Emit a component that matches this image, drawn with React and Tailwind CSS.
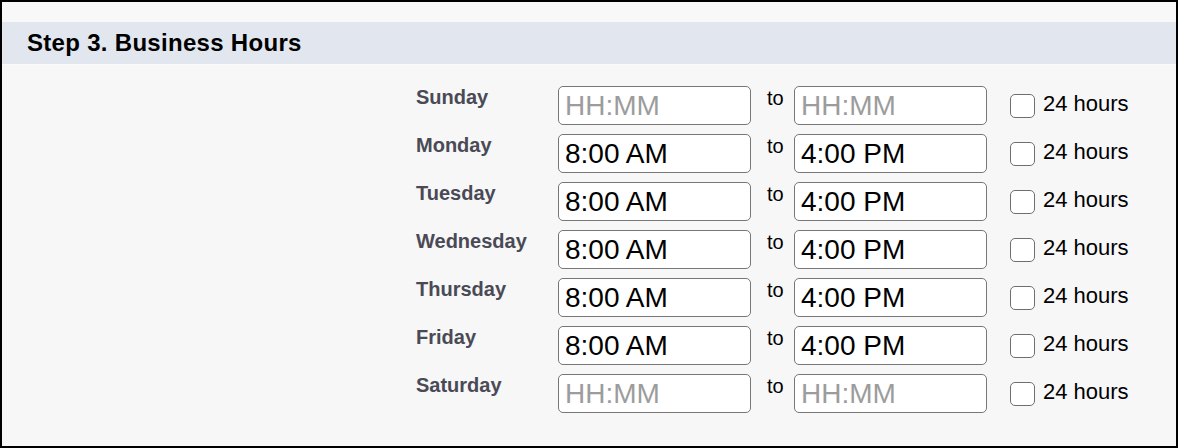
import React from "react";

const days = [
  { name: "Sunday", from: "", to: "" },
  { name: "Monday", from: "8:00 AM", to: "4:00 PM" },
  { name: "Tuesday", from: "8:00 AM", to: "4:00 PM" },
  { name: "Wednesday", from: "8:00 AM", to: "4:00 PM" },
  { name: "Thursday", from: "8:00 AM", to: "4:00 PM" },
  { name: "Friday", from: "8:00 AM", to: "4:00 PM" },
  { name: "Saturday", from: "", to: "" },
];

function TimeInput({ value }) {
  return (
    <input
      readOnly
      value={value}
      placeholder="HH:MM"
      className="box-border w-[193px] h-[39px] shrink-0 border-[1.5px] border-[#777] rounded-[5px] bg-white px-[6px] text-[28px] leading-none text-black placeholder:text-[#9c9c9c] outline-none"
      style={{ fontFamily: "'Liberation Sans', Arial, sans-serif" }}
    />
  );
}

export default function App() {
  return (
    <div
      className="w-[1178px] h-[448px] box-border border-2 border-black bg-[#f7f7f7] flex flex-col"
      style={{ fontFamily: "'Liberation Sans', Arial, sans-serif" }}
    >
      <div className="h-[20px] bg-[#f8f8f8]" />
      <div className="h-[43px] bg-[#e2e6ee] flex items-center pl-[25px] border-b border-[#fbfbfb]">
        <span className="text-[24px] font-bold text-black tracking-[0.3px]">Step 3. Business Hours</span>
      </div>
      <div className="flex flex-col gap-[9px] pt-[21px] pl-[414px]">
        {days.map((d) => (
          <div key={d.name} className="flex items-start h-[39px]">
            <div className="w-[142px] shrink-0 text-[20px] leading-[23px] font-bold text-[#4a4a56]">
              {d.name}
            </div>
            <TimeInput value={d.from} />
            <div className="w-[43px] shrink-0 pl-[16px] text-[20px] leading-[23px] text-black pt-[1px]">to</div>
            <TimeInput value={d.to} />
            <div className="flex items-center h-[39px] pl-[23px]">
              <div className="w-[25px] h-[24px] box-border border-[1.5px] border-[#6f6f6f] rounded-[5px] bg-white" />
              <span className="pl-[8px] pb-[3px] text-[22px] leading-none text-black">24 hours</span>
            </div>
          </div>
        ))}
      </div>
    </div>
  );
}
